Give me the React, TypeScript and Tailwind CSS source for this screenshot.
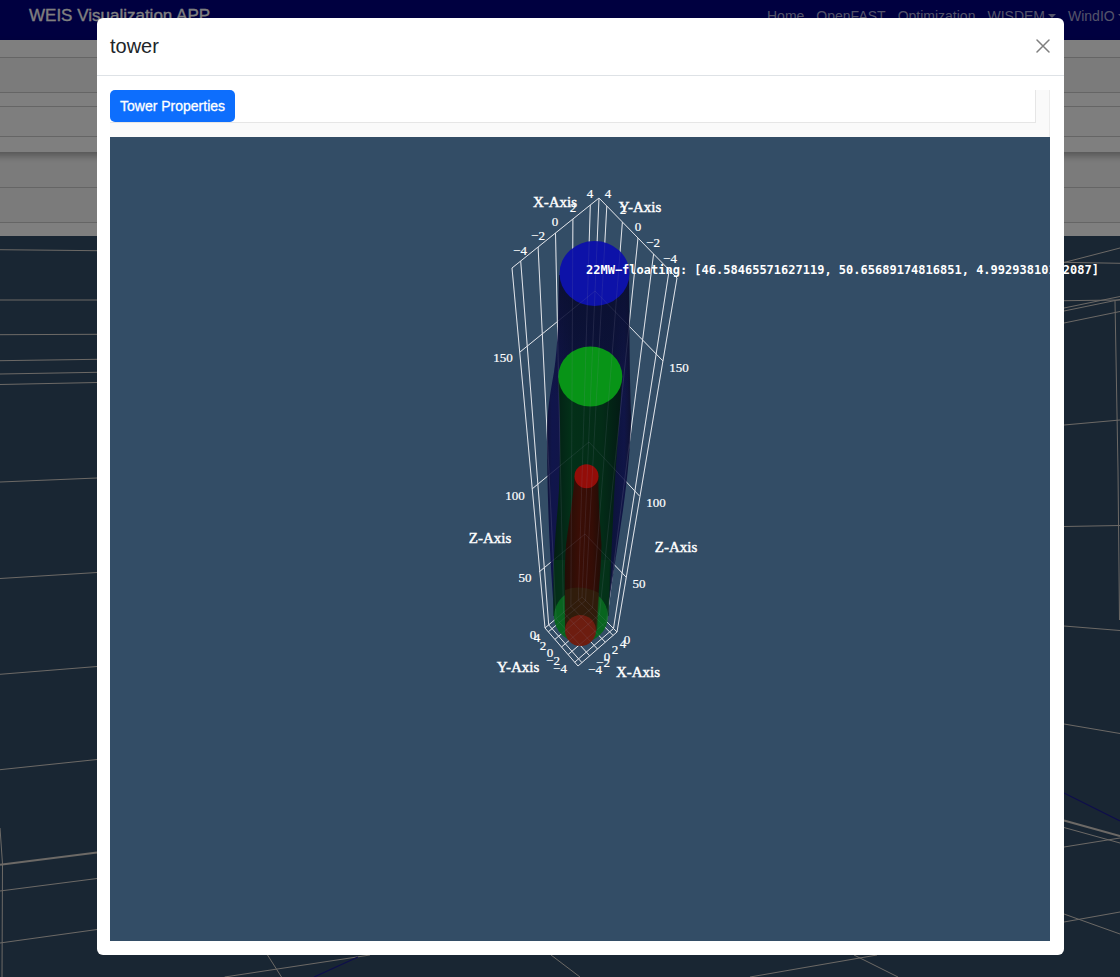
import React from "react";

type Point = [number, number];

const BACK_TOP: Point = [599, 198];
const LEFT_TOP: Point = [512, 268];
const RIGHT_TOP: Point = [677, 278];
const BACK: Point = [582, 597];
const LEFT: Point = [545, 628];
const RIGHT: Point = [617, 632];
const FRONT: Point = [578, 666];
const TICKS = [0.1, 0.3, 0.5, 0.7, 0.9];

const between = (a: Point, b: Point, t: number): Point => [
  a[0] + (b[0] - a[0]) * t,
  a[1] + (b[1] - a[1]) * t,
];

const segment = (a: Point, b: Point) => `M${a[0]} ${a[1]}L${b[0]} ${b[1]}`;

const gridPath = [
  "M512 268L599 198L677 278L617 632L578 666L545 628Z",
  "M599 198L582 597L545 628M582 597L617 632",
  "M520 352L595 291L663 361",
  "M532 489L589 442L639.5 496",
  "M539 572L585 534L626 577",
  ...TICKS.map((t) => segment(between(BACK_TOP, LEFT_TOP, t), between(BACK, LEFT, t))),
  ...TICKS.map((t) => segment(between(BACK_TOP, RIGHT_TOP, t), between(BACK, RIGHT, t))),
  ...TICKS.map((t) => segment(between(BACK, LEFT, t), between(RIGHT, FRONT, t))),
  ...TICKS.map((t) => segment(between(BACK, RIGHT, t), between(LEFT, FRONT, t))),
].join("");

const tickLabels: [string, number, number][] = [
  ["4", 590, 198],
  ["4", 608, 198],
  ["2", 573, 212],
  ["0", 555, 226],
  ["−2", 538, 240],
  ["−4", 520, 255],
  ["2", 623, 214],
  ["0", 638, 231],
  ["−2", 653, 247],
  ["−4", 670, 263],
  ["150", 503, 362],
  ["150", 679, 372],
  ["100", 515, 500],
  ["100", 656, 507],
  ["50", 525, 582],
  ["50", 639, 588],
  ["0", 533, 639],
  ["4", 537, 642],
  ["2", 543, 650],
  ["0", 550, 657],
  ["−2", 553, 665],
  ["−4", 560, 673],
  ["−4", 595, 674],
  ["−2", 603, 667],
  ["0", 607, 661],
  ["2", 615, 654],
  ["4", 623, 648],
  ["0", 627, 644],
];

const axisLabels: [string, number, number][] = [
  ["X-Axis", 555, 207],
  ["Y-Axis", 640, 212],
  ["Z-Axis", 490, 543],
  ["Z-Axis", 676, 552],
  ["Y-Axis", 518, 672],
  ["X-Axis", 638, 677],
];

function TowerScene() {
  return (
    <svg
      viewBox="110 137 940 804"
      role="img"
      aria-label="Tower geometry"
      className="block aspect-[940/804] w-full bg-[#334d66]"
    >
      <defs>
        <linearGradient id="blueBody">
          <stop offset="0" stopColor="#0e1038" />
          <stop offset="0.06" stopColor="#0e124a" />
          <stop offset="0.14" stopColor="#0f1248" />
          <stop offset="0.3" stopColor="#0a103a" />
          <stop offset="0.75" stopColor="#0a1038" />
          <stop offset="0.92" stopColor="#0e1245" />
          <stop offset="1" stopColor="#0d0f2e" />
        </linearGradient>
        <linearGradient id="blueShade" x1="0" y1="0" x2="0" y2="1">
          <stop offset="0" stopColor="#0b1030" stopOpacity="0.9" />
          <stop offset="1" stopColor="#0b1030" stopOpacity="0" />
        </linearGradient>
        <linearGradient id="greenBody">
          <stop offset="0" stopColor="#031d14" />
          <stop offset="0.25" stopColor="#033018" />
          <stop offset="0.7" stopColor="#032c17" />
          <stop offset="1" stopColor="#031a14" />
        </linearGradient>
        <linearGradient id="redBody">
          <stop offset="0" stopColor="#220d06" />
          <stop offset="0.4" stopColor="#3a0e06" />
          <stop offset="0.75" stopColor="#340d06" />
          <stop offset="1" stopColor="#200c06" />
        </linearGradient>
      </defs>
      <path d={gridPath} fill="none" stroke="#eef1f3" strokeWidth="1" />
      <path
        d="M559 275C559 310 558 345 554 372C550 395 547 410 547 435C547 500 550 560 554 612C557 640 604 640 608 612C612 580 618 545 623 510C628 475 631 440 631 415C630 380 629 330 629 275Z"
        fill="url(#blueBody)"
        opacity="0.95"
      />
      <path d="M559 275L557 355L549 400H630L629 275Z" fill="url(#blueShade)" />
      <ellipse cx="594.5" cy="273.5" rx="35" ry="32.5" fill="#0d12a8" />
      <path
        d="M558 378C561 420 560 460 559 490C557 520 554 545 553.5 575V616H608.5C610 590 611 560 613 520C615 470 619 430 622 378Z"
        fill="url(#greenBody)"
      />
      <ellipse cx="581" cy="616" rx="27" ry="26.5" fill="#08651f" />
      <path
        d="M553.5 560V616C556 600 566 590 581 590C596 590 607 600 608.5 616L610 560Z"
        fill="#05391b"
        opacity="0.6"
      />
      <ellipse cx="590.3" cy="376.5" rx="32" ry="30" fill="#089417" />
      <path
        d="M574.5 477C573 500 569 520 566 545C564 570 565 600 565 631H596C597 605 601 575 601.5 545C600 520 598 500 598.5 477Z"
        fill="url(#redBody)"
      />
      <path d="M565 590Q581 584 599 593L597 631H565Z" fill="#30220d" opacity="0.75" />
      <circle cx="580.5" cy="630.5" r="15.5" fill="#6d1d10" />
      <circle cx="586.5" cy="476.2" r="12" fill="#930d08" />
      <path d={gridPath} fill="none" stroke="#8c8ca8" strokeWidth="0.8" opacity="0.18" />
      <g
        fill="#fff"
        stroke="#fff"
        strokeWidth="0.2"
        textAnchor="middle"
        className="font-['Liberation_Serif',serif] text-[13px]"
      >
        {tickLabels.map(([label, x, y], i) => (
          <text key={i} x={x} y={y}>
            {label}
          </text>
        ))}
      </g>
      <g
        fill="#fff"
        stroke="#fff"
        strokeWidth="0.4"
        textAnchor="middle"
        className="font-['Liberation_Serif',serif] text-[15px]"
      >
        {axisLabels.map(([label, x, y], i) => (
          <text key={i} x={x} y={y}>
            {label}
          </text>
        ))}
      </g>
    </svg>
  );
}

function BackdropScene() {
  return (
    <svg
      viewBox="0 236 1120 741"
      preserveAspectRatio="xMidYMin slice"
      aria-hidden="true"
      className="min-h-0 w-full flex-1 bg-[#334d66]"
      fill="none"
      stroke="#d8d2cc"
      strokeWidth="1"
    >
      <path d="M0 249.7L97 250.7M0 300H97M0 334.7L97 334.3M0 360.7L97 359.3M0 374L97 372.3M0 384.5L97 382.5M0 482L97 478M0 578.5L97 572.5M0 674.3L97 666.5M0 769.7L97 759.5M0 891L97 878.5M0 943L97 929.5" />
      <path d="M0 828L2.5 864L2 977" />
      <path d="M1064 262.5L1120 248M1064 262.3L1120 263.3M1064 300.7L1120 300M1064 308L1120 296.5M1064 311L1120 299.5M1064 323L1120 311.5M1064 425L1120 420M1064 526.5L1120 525.5M1064 626L1120 630.5M1064 724L1120 733.5M1064 827.5L1120 843M1064 847L1120 838M1064 914L1120 934M1064 922L1120 912" />
      <path d="M1115 301L1118 470L1119.5 620" />
      <path d="M0 864.7L97 852.5M1064 820.5L1120 836" strokeWidth="2" />
      <path d="M267.5 955L281.5 977M224.6 977L370 955M551 955L580 977M750 977L877 955M854 955L898 977" />
      <path d="M314 977L358 957M1064 793L1120 821" stroke="#1c1c96" strokeWidth="1.3" />
    </svg>
  );
}

const navLinks = [
  { label: "Home", menu: false },
  { label: "OpenFAST", menu: false },
  { label: "Optimization", menu: false },
  { label: "WISDEM", menu: true },
  { label: "WindIO", menu: true },
];

function PageBehind() {
  return (
    <div className="absolute inset-0 flex flex-col overflow-hidden bg-white">
      <header className="flex h-10 shrink-0 items-start overflow-hidden bg-[#000080] pt-1.5 pl-[29px] leading-5">
        <a
          href="#"
          className="text-[17px] whitespace-nowrap text-white [-webkit-text-stroke:0.3px_white]"
        >
          WEIS Visualization APP
        </a>
        <nav className="ml-auto flex w-[353px] shrink-0 gap-3 text-[14px] whitespace-nowrap text-[#a6a6d3]">
          {navLinks.map(({ label, menu }) => (
            <a key={label} href="#" className="flex shrink-0 items-center gap-[3px]">
              {label}
              {menu && (
                <svg viewBox="0 0 8 4" className="h-1 w-2" fill="currentColor" aria-hidden="true">
                  <path d="M0 0H8L4 4Z" />
                </svg>
              )}
            </a>
          ))}
        </nav>
      </header>
      <div className="relative -mx-4 flex h-28 shrink-0 flex-col bg-white pt-[17px] shadow-[0_4px_7px_rgba(0,0,0,0.3)]">
        <div className="h-9 border-y border-[#cacaca] bg-[#f7f7f7]" />
        <div className="mt-[13px] h-[31px] border-y border-[#cacaca] bg-[#fdfdfd]" />
      </div>
      <div className="h-9 shrink-0 border-b border-[#cacaca] bg-[#f7f7f7]" />
      <div className="h-[35px] shrink-0 border-b border-[#cacaca] bg-[#f7f7f7]" />
      <div className="h-[13px] shrink-0 bg-white" />
      <BackdropScene />
      <div className="absolute inset-0 bg-black/50" />
    </div>
  );
}

export default function App() {
  return (
    <div className="relative min-h-screen overflow-hidden pt-[18px] pr-14 pb-[22px] pl-[97px] font-['Liberation_Sans',sans-serif]">
      <PageBehind />
      <section
        role="dialog"
        aria-labelledby="dialog-title"
        className="relative rounded-md bg-white text-[#212529]"
      >
        <header className="flex h-[58px] items-center justify-between border-b border-[#dee2e6] px-[13px] pb-0.5">
          <h1 id="dialog-title" className="text-xl">
            tower
          </h1>
          <button type="button" aria-label="Close" className="p-px text-[#7f7f7f]">
            <svg
              viewBox="0 0 14 14"
              className="size-3.5"
              fill="none"
              stroke="currentColor"
              strokeWidth="1.5"
              strokeLinecap="round"
            >
              <path d="M1 1L13 13M13 1L1 13" />
            </svg>
          </button>
        </header>
        <div className="px-[13px] py-3.5">
          <div className="mr-px border-r border-[#ececec] bg-[#fafafa] pr-[13px] pb-3.5">
            <div className="flex h-[33px] items-start border-r border-b border-[#e6e6e6] bg-white">
              <button
                type="button"
                className="h-8 rounded-[5px] bg-[#0d6efd] px-2.5 text-[14px] text-white [-webkit-text-stroke:0.3px_white]"
              >
                Tower Properties
              </button>
            </div>
          </div>
          <div className="relative mr-px">
            <TowerScene />
            <p className="absolute top-[125px] left-[476px] font-['DejaVu_Sans_Mono',monospace] text-[12px] leading-4 font-bold whitespace-nowrap text-white">
              22MW−floating: [46.58465571627119, 50.65689174816851, 4.99293810192087]
            </p>
          </div>
        </div>
      </section>
    </div>
  );
}
